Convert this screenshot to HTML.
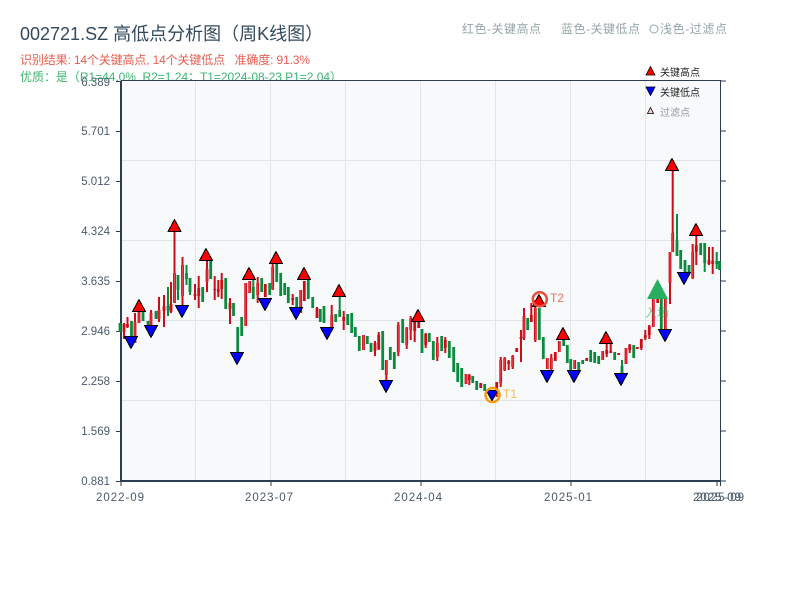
<!DOCTYPE html>
<html><head><meta charset="utf-8">
<style>
html,body{margin:0;padding:0;background:#fff;width:800px;height:600px;overflow:hidden}
svg{display:block;position:absolute;left:0;top:0}
text{font-family:"Liberation Sans","Noto Sans CJK SC",sans-serif}
</style></head><body>
<svg width="800" height="600" viewBox="0 0 800 600" xmlns="http://www.w3.org/2000/svg">
<text x="20" y="40" font-size="18" fill="#34495e">002721.SZ 高低点分析图（周K线图）</text>
<text x="20" y="64" font-size="12" fill="#e74c3c" opacity=".9" textLength="290" lengthAdjust="spacing">识别结果: 14个关键高点, 14个关键低点&#160;&#160;&#160;准确度: 91.3%</text>
<text x="20" y="81" font-size="12" fill="#27ae60" opacity=".9" textLength="322" lengthAdjust="spacing">优质：是（R1=44.0%&#160;&#160;R2=1.24；T1=2024-08-23 P1=2.04）</text>
<text x="462" y="33" font-size="12" fill="#95a5a6" textLength="79" lengthAdjust="spacing">红色-关键高点</text>
<text x="561" y="33" font-size="12" fill="#95a5a6" textLength="79" lengthAdjust="spacing">蓝色-关键低点</text>
<circle cx="654" cy="29" r="4" fill="none" stroke="#95a5a6"/>
<text x="660" y="33" font-size="12" fill="#95a5a6" textLength="67" lengthAdjust="spacing">浅色-过滤点</text>

<rect x="121" y="81" width="600" height="400" fill="#f7f9fb"/>
<path d="M195.500 81V481M270.500 81V481M345.500 81V481M420.500 81V481M495.500 81V481M570.500 81V481M645.500 81V481M121 160.500H721M121 240.500H721M121 320.500H721M121 400.500H721" stroke="#e1e5ea" stroke-width="1" fill="none"/>

<path d="M121 80.500H721M720.500 81V481" stroke="#2c3e50" stroke-width="1" fill="none"/>
<path d="M121 81V482M120 481H721" stroke="#2c3e50" stroke-width="2" fill="none"/>
<path d="M116 81.500H121M116 131.500H121M116 181.500H121M116 231.500H121M116 281.500H121M116 331.500H121M116 381.500H121M116 431.500H121M116 481.500H121M721 81H726M721 131H726M721 181H726M721 231H726M721 281H726M721 331H726M721 381H726M721 431H726M721 481H726M121 481V486M271 481V486M421 481V486M571 481V486M717 481V486M720.500 481V486" stroke="#2c3e50" stroke-width="1" fill="none"/>

<g font-size="11.500" fill="#4a5a6a" text-anchor="end">
<text x="110" y="86">6.389</text><text x="110" y="135">5.701</text><text x="110" y="185">5.012</text><text x="110" y="235">4.324</text><text x="110" y="285">3.635</text><text x="110" y="335">2.946</text><text x="110" y="385">2.258</text><text x="110" y="435">1.569</text><text x="110" y="485">0.881</text>
</g>
<g font-size="11.500" fill="#4a5a6a">
<text x="96" y="501" textLength="48" lengthAdjust="spacing">2022-09</text><text x="245" y="501" textLength="48" lengthAdjust="spacing">2023-07</text><text x="394" y="501" textLength="48" lengthAdjust="spacing">2024-04</text><text x="544" y="501" textLength="48" lengthAdjust="spacing">2025-01</text><text x="693" y="501" textLength="48" lengthAdjust="spacing">2025-09</text><text x="696" y="501" textLength="48" lengthAdjust="spacing">2025-09</text>
</g>

<!-- green wicks -->
<path fill="none" stroke="#0a8a3c" stroke-width="2" d="M168 287V316M178 275V300M186.500 265V285M190 278V295M253.300 279V299M339.700 297V317M622 360V373M677 214V256M704.700 243V272M716.700 252V269"/>
<!-- green bodies -->
<path fill="none" stroke="#0a8a3c" stroke-width="2.800" d="M120 323V332M131.500 321V337M143 311V321M148 321V326M156 311V319M168 306V310M178 275V290M186.500 273V279M190 278V292M202.700 287V302M210.700 260V279M225.700 278V309M233.500 303V316M237.700 327V353M241.700 317V336M253.300 287V299M261.700 278V292M269.700 283V295M276.700 264V282M280.700 273V296M284.700 283V295M288.300 287V303M296.700 297V308M308.300 280V299M312.700 297V308M320.300 309V322M324 306V323M335.700 314V322M339.700 310V317M347.700 314V325M351.700 313V333M355.300 327V337M359.300 336V351M367.300 336V344M371 343V352M382.700 331V370M390.300 347V360M394.300 352V369M402.700 319V343M422 329V353M429.300 333V342M433.300 341V360M441.700 336V351M449.300 341V358M453.700 347V372M457.700 363V382M461.700 368V387M472.700 376V383M476.700 381V390M484.700 384V391M527.700 318V330M539.300 308V340M543.300 337V359M563.700 340V346M567.300 345V363M570.700 359V370M578.700 362V370M582.700 360V364M590.700 350V362M594.700 352V363M598.700 356V364M614.700 352V360M622 366V373M633.700 345V358M661.300 297V330M677 240V256M680.700 250V269M685 260V273M689 265V273M700.700 243V255M704.700 243V263M716.700 261V264M719.500 261V270"/>
<!-- red wicks -->
<path fill="none" stroke="#cc0d15" stroke-width="2" d="M124 323V339M127.500 317V328M135 313V343M151 310V335M159 297V322M164 295V327M171 282V313M174.500 232V303M182.500 257V305M195 284V300M198.700 276V308M207 260V292M214.700 276V300M218.300 280V297M221.700 273V299M230 298V324M257.700 277V303M272.700 263V290M292.700 294V305M317 307V318M331.700 305V330M343.700 311V330M375 341V356M378.700 332V350M386.300 360V380M398.300 322V356M406.700 327V349M410.700 316V340M414.700 320V342M425.700 333V348M437.300 337V361M445.300 337V353M469.300 374V385M496.700 382V397M500.700 357V387M504.700 357V371M508.700 360V370M512.700 355V369M521 330V362M524 308V340M531.300 303V322M535.300 300V342M551.300 354V370M606.700 343V357M610.700 343V353M629.700 344V353M641.300 339V350M645.300 330V340M649.300 325V339M670 252V304M672.700 170V250M692.700 244V279M696.300 233V265M709 247V265M712.700 247V274"/>
<!-- red bodies -->
<path fill="none" stroke="#cc0d15" stroke-width="2.800" d="M124 324V332M127.500 324V327M135 322V343M139 312V323M151 313V325M159 310V319M164 306V311M171 304V312M174.500 273V303M182.500 265V296M195 294V296M198.700 288V296M207 269V282M214.700 289V290M218.300 289V292M221.700 280V289M230 303V309M245.700 283V326M249.700 281V293M257.700 283V295M265.300 284V297M272.700 267V289M292.700 298V300M300.700 290V313M304.300 281V301M317 308V318M331.700 315V327M343.700 317V321M363.500 335V350M375 343V351M378.700 335V349M386.300 360V375M398.300 325V352M406.700 328V345M410.700 318V330M414.700 321V331M418.700 322V328M425.700 334V345M437.300 343V357M445.300 340V348M466 374V384M469.300 375V380M480.700 383V388M488.700 390V394M496.700 382V393M500.700 360V383M504.700 358V370M508.700 361V364M512.700 356V367M516.700 348V352M521 337V339M524 316V338M531.300 315V322M535.300 308V340M547.300 358V369M551.300 358V369M555.300 352V361M559.300 341V352M574.700 360V369M586.700 358V361M602.700 351V360M606.700 350V354M610.700 351V353M618.700 353V355M626 348V364M629.700 345V350M637.300 347V349M641.300 339V348M645.300 335V338M649.300 326V335M653.300 297V327M657.700 297V303M665.300 297V330M670 252V283M672.700 233V252M692.700 252V278M696.300 245V252M709 260V264M712.700 261V264"/>
<path fill="none" stroke="#ee4a50" stroke-width=".8" d="M135 322V343M139 312V323M151 313V325M159 310V319M174.500 273V303M182.500 265V296M207 269V282M245.700 283V326M249.700 281V293M257.700 283V295M272.700 267V289M300.700 290V313M331.700 315V327M363.500 335V350M386.300 360V375M398.300 325V352M406.700 328V345M410.700 318V330M437.300 343V357M466 374V384M500.700 360V383M504.700 358V370M512.700 356V367M524 316V338M535.300 308V340M547.300 358V369M551.300 358V369M559.300 341V352M574.700 360V369M602.700 351V360M626 348V364M653.300 297V327M665.300 297V330M670 252V283M672.700 233V252M692.700 252V278"/>

<!-- key highs -->
<g fill="#ff0000" stroke="#000" stroke-width="1" shape-rendering="crispEdges">
<path d="M139 299.500L145.500 311.500H132.500Z"/>
<path d="M174.500 219.500L181 231.500H168Z"/>
<path d="M206 248.500L212.500 260.500H199.500Z"/>
<path d="M249 267.500L255.500 279.500H242.500Z"/>
<path d="M276 251.500L282.500 263.500H269.500Z"/>
<path d="M304 267.500L310.500 279.500H297.500Z"/>
<path d="M339 284.500L345.500 296.500H332.500Z"/>
<path d="M418 309.500L424.500 321.500H411.500Z"/>
<path d="M539 294.500L545.500 306.500H532.500Z"/>
<path d="M563 327.500L569.500 339.500H556.500Z"/>
<path d="M606 331.500L612.500 343.500H599.500Z"/>
<path d="M672 158.500L678.500 170.500H665.500Z"/>
<path d="M696 223.500L702.500 235.500H689.500Z"/>
</g>
<!-- key lows -->
<g fill="#0000ff" stroke="#000" stroke-width="1" shape-rendering="crispEdges">
<path d="M124.500 336.500H137.500L131 348.500Z"/>
<path d="M144.500 325.500H157.500L151 337.500Z"/>
<path d="M175.500 305.500H188.500L182 317.500Z"/>
<path d="M230.500 352.500H243.500L237 364.500Z"/>
<path d="M258.500 298.500H271.500L265 310.500Z"/>
<path d="M289.500 307.500H302.500L296 319.500Z"/>
<path d="M320.500 327.500H333.500L327 339.500Z"/>
<path d="M379.500 380.500H392.500L386 392.500Z"/>
<path d="M486.500 390.500H497.500L492 401Z"/>
<path d="M540.500 370.500H553.500L547 382.500Z"/>
<path d="M567.500 370.500H580.500L574 382.500Z"/>
<path d="M614.500 373.500H627.500L621 385.500Z"/>
<path d="M658.500 329.500H671.500L665 341.500Z"/>
<path d="M677.500 272.500H690.500L684 284.500Z"/>
</g>

<!-- annotations -->
<circle cx="492.500" cy="395" r="7" fill="none" stroke="#f39c12" stroke-width="2.500"/>
<text x="503" y="398" font-size="12" fill="#f39c12" opacity=".7">T1</text>
<circle cx="539.800" cy="299.300" r="7" fill="none" stroke="#e74c3c" stroke-width="2.500"/>
<text x="550" y="302" font-size="12" fill="#e74c3c" opacity=".8">T2</text>
<path d="M657.500 279L668 299H647Z" fill="#27ae60"/>
<text x="645" y="317" font-size="12" fill="#27ae60" opacity=".6">入场</text>

<!-- legend -->
<path d="M650.500 66.500L655 75H646Z" fill="#ff0000" stroke="#000" stroke-width=".8"/>
<text x="660" y="76" font-size="10" fill="#222">关键高点</text>
<path d="M646 87H655L650.500 95.500Z" fill="#0000ff" stroke="#000" stroke-width=".8"/>
<text x="660" y="96" font-size="10" fill="#222">关键低点</text>
<path d="M650.500 107.500L653.500 113.500H647.500Z" fill="#ffd0d0" stroke="#000" stroke-width=".8"/>
<text x="660" y="116" font-size="10" fill="#999">过滤点</text>
</svg>
</body></html>
